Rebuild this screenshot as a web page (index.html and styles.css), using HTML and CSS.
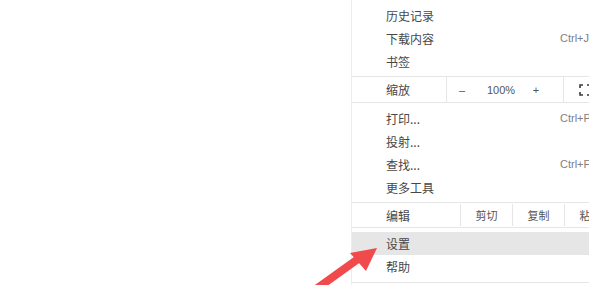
FILE: index.html
```html
<!DOCTYPE html>
<html lang="zh">
<head>
<meta charset="utf-8">
<link rel="stylesheet" href="styles.css">
</head>
<body>
<div class="stage">
  <div class="spacer"></div>
  <div class="menu">
    <div class="group g1">
      <div class="item"><span class="label">历史记录</span></div>
      <div class="item"><span class="label">下载内容</span><span class="key">Ctrl+J</span></div>
      <div class="item"><span class="label">书签</span></div>
    </div>
    <div class="sep"></div>
    <div class="zoomrow">
      <span class="rlabel zl">缩放</span>
      <div class="zbox">
        <span class="zminus">–</span>
        <span class="zval">100%</span>
        <span class="zplus">+</span>
      </div>
      <div class="fbox">
        <svg class="fs" width="12" height="12" viewBox="0 0 12 12">
          <path d="M1 4V1h3M8 1h3v3M11 8v3H8M4 11H1V8" fill="none" stroke="#3a3a3a" stroke-width="1.6"/>
        </svg>
      </div>
    </div>
    <div class="sep"></div>
    <div class="group g3">
      <div class="item"><span class="label">打印...</span><span class="key">Ctrl+P</span></div>
      <div class="item"><span class="label">投射...</span></div>
      <div class="item"><span class="label">查找...</span><span class="key">Ctrl+F</span></div>
      <div class="item"><span class="label">更多工具</span></div>
    </div>
    <div class="sep"></div>
    <div class="editrow">
      <span class="rlabel el">编辑</span>
      <span class="ebtn">剪切</span>
      <span class="ebtn">复制</span>
      <span class="ebtn">粘贴</span>
    </div>
    <div class="sep"></div>
    <div class="group g5">
      <div class="item hl"><span class="label">设置</span></div>
      <div class="item"><span class="label">帮助</span></div>
    </div>
  </div>
</div>
<svg class="arrow" width="100" height="45" viewBox="300 240 100 45">
  <path d="M312 292 L358 259" stroke="#f04a4c" stroke-width="8" stroke-linecap="butt" fill="none"/>
  <path d="M377 248 L350 253 L366 271 Z" fill="#f04a4c"/>
</svg>
</body>
</html>
```
FILE: styles.css
```css
html, body {
  margin: 0;
  padding: 0;
  background: #ffffff;
  overflow: hidden;
}
body {
  width: 589px;
  height: 285px;
  position: relative;
  font-family: "Noto Sans CJK SC", "Liberation Sans", sans-serif;
  font-size: 12px;
  color: #474747;
}
.stage {
  display: flex;
  width: 589px;
  height: 285px;
  overflow: hidden;
}
.spacer {
  width: 351px;
  flex: none;
}
.menu {
  width: 280px;
  flex: none;
  border-left: 1px solid #ececec;
  background: #ffffff;
}
.group {
  padding: 4px 0 3px;
}
.g5 {
  padding: 4px 0;
  border-bottom: 1px solid #e6e6e6;
}
.item {
  height: 23px;
  display: grid;
  grid-template-columns: 174px auto;
  align-items: center;
  padding-left: 34px;
  line-height: 23px;
}
.item.hl {
  background: #e6e6e6;
}
.key {
  font-family: "Liberation Sans", sans-serif;
  font-size: 11px;
  color: #808080;
}
.sep {
  height: 1px;
  background: #e6e6e6;
}
.zoomrow {
  height: 25px;
  display: flex;
  align-items: stretch;
  padding-left: 34px;
}
.rlabel {
  display: flex;
  align-items: center;
}
.zl {
  width: 60px;
}
.zbox {
  width: 116px;
  border-left: 1px solid #e6e6e6;
  display: flex;
  align-items: center;
  font-family: "Liberation Sans", sans-serif;
  font-size: 11px;
  color: #555;
}
.zminus {
  width: 30px;
  text-align: center;
}
.zval {
  width: 48px;
  text-align: center;
}
.zplus {
  width: 22px;
  text-align: center;
}
.fbox {
  width: 42px;
  border-left: 1px solid #e6e6e6;
  display: flex;
  align-items: center;
  justify-content: center;
}
.editrow {
  height: 24px;
  display: flex;
  align-items: stretch;
  padding-left: 34px;
}
.el {
  width: 74px;
}
.ebtn {
  width: 51px;
  border-left: 1px solid #e6e6e6;
  display: flex;
  align-items: center;
  justify-content: center;
  font-size: 11px;
  color: #555;
  margin: 1px 0;
}
.arrow {
  position: absolute;
  left: 300px;
  top: 240px;
}
```
